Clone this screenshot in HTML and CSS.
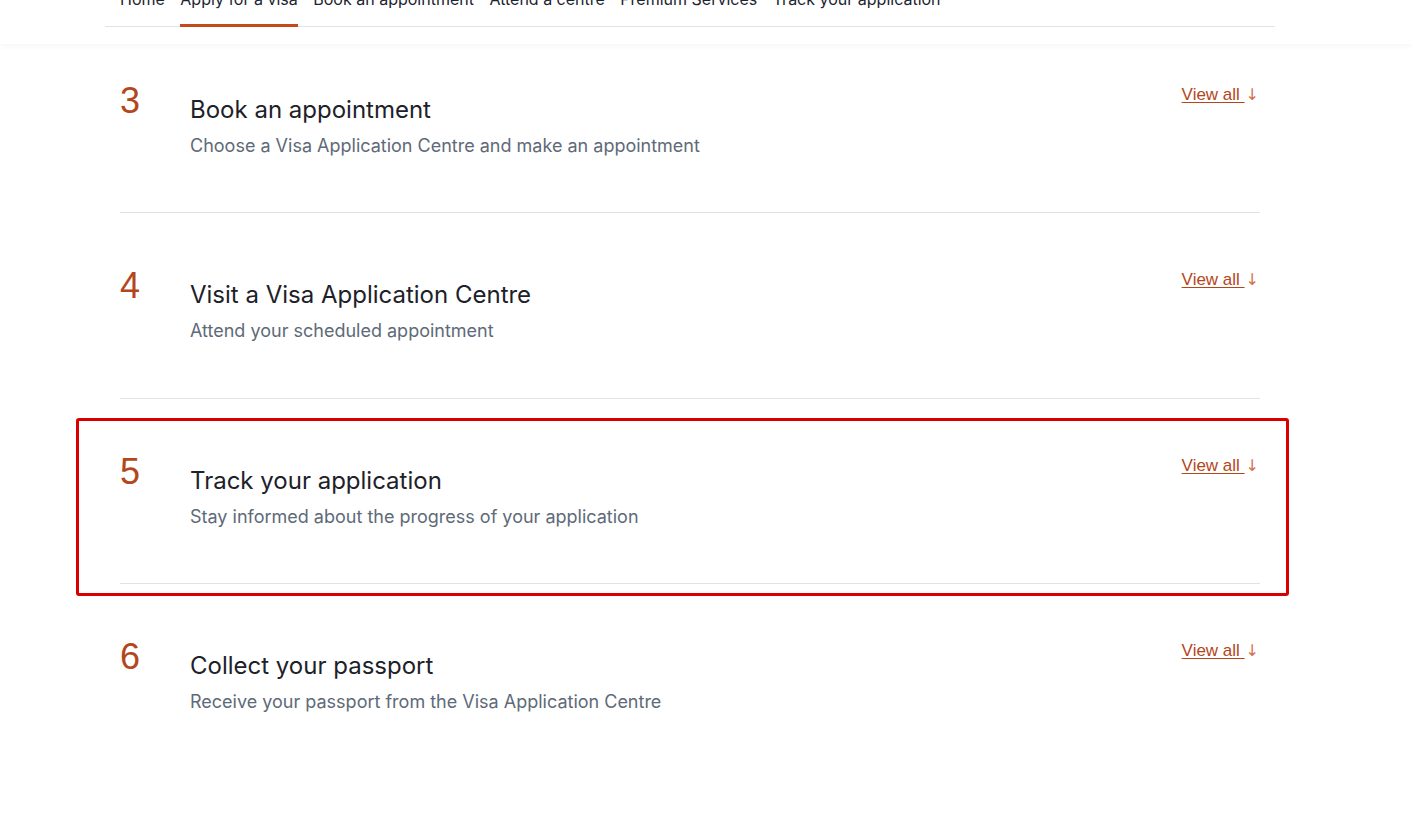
FILE: index.html
```html
<!DOCTYPE html>
<html lang="en">
<head>
<meta charset="utf-8">
<title>Apply for a visa</title>
<link rel="stylesheet" href="styles.css">
</head>
<body>
<header class="topbar">
  <nav class="container nav">
    <a class="nav-item" href="#">Home</a>
    <a class="nav-item active" href="#">Apply for a visa</a>
    <a class="nav-item" href="#">Book an appointment</a>
    <a class="nav-item" href="#">Attend a centre</a>
    <a class="nav-item" href="#">Premium Services</a>
    <a class="nav-item" href="#">Track your application</a>
  </nav>
</header>
<main class="container steps">
  <section class="step">
    <div class="num">3</div>
    <div class="text">
      <h2 class="title">Book an appointment</h2>
      <p class="desc">Choose a Visa Application Centre and make an appointment</p>
    </div>
    <a class="view" href="#"><span class="view-label">View all </span><span class="arrow">↓</span></a>
  </section>
  <section class="step">
    <div class="num">4</div>
    <div class="text">
      <h2 class="title">Visit a Visa Application Centre</h2>
      <p class="desc">Attend your scheduled appointment</p>
    </div>
    <a class="view" href="#"><span class="view-label">View all </span><span class="arrow">↓</span></a>
  </section>
  <section class="step highlighted">
    <div class="num">5</div>
    <div class="text">
      <h2 class="title">Track your application</h2>
      <p class="desc">Stay informed about the progress of your application</p>
    </div>
    <a class="view" href="#"><span class="view-label">View all </span><span class="arrow">↓</span></a>
    <div class="highlight-box"></div>
  </section>
  <section class="step last">
    <div class="num">6</div>
    <div class="text">
      <h2 class="title">Collect your passport</h2>
      <p class="desc">Receive your passport from the Visa Application Centre</p>
    </div>
    <a class="view" href="#"><span class="view-label">View all </span><span class="arrow">↓</span></a>
  </section>
</main>
</body>
</html>
```

FILE: styles.css
```css
html, body {
  margin: 0;
  padding: 0;
  background: #ffffff;
}
body {
  padding-right: 32px;
  font-family: Inter, "Noto Sans", sans-serif;
  overflow: hidden;
  height: 834px;
}
.container {
  width: 1170px;
  margin: 0 auto;
  box-sizing: border-box;
}
.topbar {
  position: relative;
  z-index: 2;
  height: 44px;
  margin-right: -32px;
  padding-right: 32px;
  background: #ffffff;
  box-shadow: 0 2px 6px rgba(0, 0, 0, 0.045);
  overflow: hidden;
}
.nav {
  display: flex;
  gap: 15.5px;
  padding-left: 15px;
  margin-top: -11px;
  border-bottom: 1px solid #e3e3e3;
}
.nav-item {
  font-size: 16px;
  line-height: 20px;
  color: #1c2430;
  text-decoration: none;
  padding-bottom: 15px;
  border-bottom: 3px solid transparent;
  margin-bottom: -1px;
  white-space: nowrap;
}
.nav-item.active {
  border-bottom-color: #c44a1c;
}
.steps {
  padding: 0 15px;
  margin-top: -16.5px;
}
.step {
  display: flex;
  align-items: flex-start;
  padding: 53px 0 54.5px;
  border-bottom: 1px solid #e2e2e2;
  position: relative;
}
.step.last {
  border-bottom: none;
}
.num {
  width: 70px;
  flex: none;
  font-family: "Liberation Sans", Arial, sans-serif;
  font-size: 36px;
  line-height: 40px;
  color: #b4461c;
}
.text {
  flex: 1;
  padding-top: 14px;
}
.title {
  margin: 0;
  font-size: 24px;
  line-height: 30px;
  font-weight: 400;
  color: #1d2129;
}
.desc {
  margin: 9px 0 0;
  font-size: 18px;
  line-height: 24px;
  color: #5e6a78;
}
.view {
  margin-top: 4px;
  margin-right: 1px;
  font-family: "Liberation Sans", Arial, sans-serif;
  font-size: 17px;
  line-height: 20px;
  color: #b4461c;
  text-decoration: none;
  white-space: pre;
}
.view-label {
  text-decoration: underline;
  text-underline-offset: 2px;
}
.arrow {
  font-family: "DejaVu Sans", sans-serif;
  font-size: 16px;
  color: #d07350;
  padding-left: 1px;
}
.highlight-box {
  position: absolute;
  left: -44px;
  right: -29px;
  top: 19px;
  bottom: -13px;
  border: 3px solid #d80000;
  border-radius: 3px;
  pointer-events: none;
}
```
